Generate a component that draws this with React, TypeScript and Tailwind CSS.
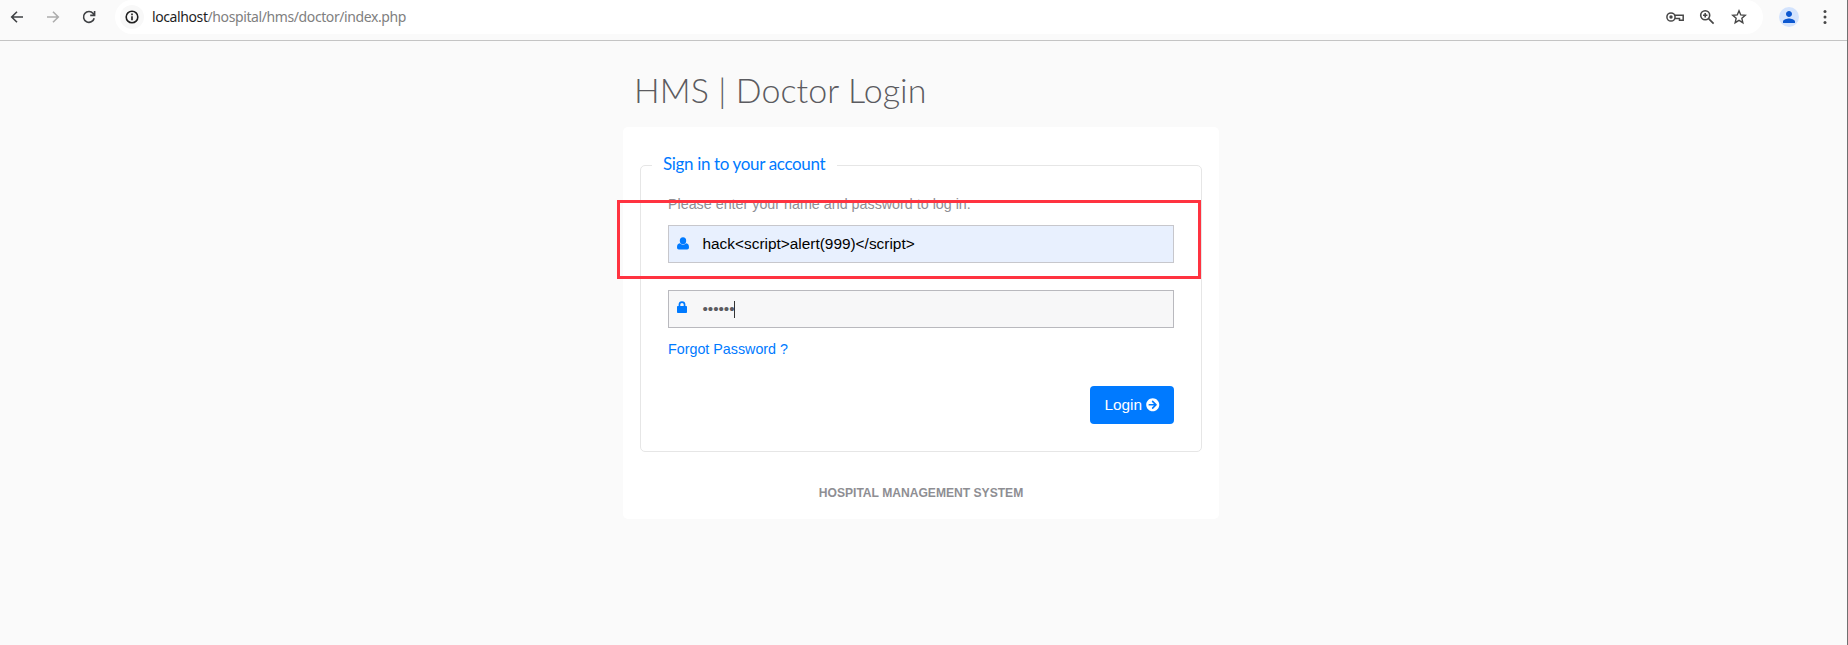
import React from "react";
import { MdPerson } from "react-icons/md";
import { FaArrowCircleRight } from "react-icons/fa";

type IconProps = { className?: string };

function Stroke({ className = "", children }: IconProps & { children: React.ReactNode }) {
  return (
    <svg viewBox="0 0 16 16" fill="none" stroke="currentColor" strokeWidth="1.6" className={`size-4 shrink-0 ${className}`}>
      {children}
    </svg>
  );
}

function Toolbar() {
  return (
    <header className="flex h-[41px] shrink-0 items-start border-b border-[#c4c4c4] bg-[#fafafa]">
      <nav className="flex h-[34px] w-[115px] shrink-0 items-center pl-[9px] text-[#3f4144]">
        <Stroke><path d="M14 8H3M8 2.7 2.7 8 8 13.3" /></Stroke>
        <Stroke className="ml-5 text-[#adadad]"><path d="M2 8h11M8 2.7 13.3 8 8 13.3" /></Stroke>
        <Stroke className="ml-5"><path d="M13.2 9.2A5.4 5.4 0 1 1 12.2 4.6L13.4 6M13.6 2v4.4H9.2" /></Stroke>
      </nav>
      <div className="flex h-[34px] w-[1648px] shrink-0 items-center rounded-r-[17px] rounded-l-[17px] bg-white">
        <span className="ml-[5px] flex size-6 items-center justify-center rounded-full bg-[#f8f8f8] text-[#1f1f1f]">
          <Stroke><circle cx="8" cy="8" r="5.8" /><path d="M8 7.2v4M8 4.6v1.6" /></Stroke>
        </span>
        <span className="ml-2 font-['Noto_Sans'] text-[14px] leading-[20px] tracking-[-0.4px] whitespace-pre text-[#808080]">
          <span className="text-[#1f1f1f]">localhost</span>/hospital/hms/doctor/index.php
        </span>
        <span className="ml-auto flex items-center pr-4 text-[#474747]">
          <svg viewBox="0 0 18 12" fill="none" stroke="currentColor" strokeWidth="1.5" className="-mr-px h-3 w-[18px]">
            <circle cx="5" cy="6" r="4.1" />
            <circle cx="5" cy="6" r="1.7" fill="currentColor" stroke="none" />
            <path d="M8.8 4.3h8.4v5h-3.7V7.6H8.8" />
          </svg>
          <Stroke className="ml-4"><circle cx="6.2" cy="6.2" r="4.5" /><path d="m9.6 9.6 5 5M6.2 4v4.4M4 6.2h4.4" /></Stroke>
          <Stroke className="ml-4">
            <path strokeWidth="1.4" d="m8 1.8 1.75 4.15 4.5.4-3.4 2.95 1 4.4L8 11.4l-3.85 2.3 1-4.4-3.4-2.95 4.5-.4Z" />
          </Stroke>
        </span>
      </div>
      <div className="flex h-[34px] items-center pl-4 text-[#474747]">
        <span className="flex size-5 items-center justify-center rounded-full bg-[#d3e3fd]">
          <MdPerson className="size-[18px] text-[#0b57d0]" />
        </span>
        <svg viewBox="0 0 16 16" fill="currentColor" className="ml-[18px] size-4">
          <circle cx="8" cy="2.5" r="1.5" /><circle cx="8" cy="8" r="1.5" /><circle cx="8" cy="13.5" r="1.5" />
        </svg>
      </div>
    </header>
  );
}

function UserIcon() {
  return (
    <svg viewBox="0 0 12 13" fill="currentColor" className="mb-[2px] h-[13px] w-3">
      <ellipse cx="6" cy="3.7" rx="3.2" ry="3.5" />
      <path d="M2.8 6.2C.8 6.5 0 8 0 10.3c0 1.6.8 2.2 1.8 2.2h8.4c1 0 1.8-.6 1.8-2.2 0-2.3-.8-3.8-2.8-4.1a4.2 4.2 0 0 1-6.4 0Z" />
    </svg>
  );
}

function LockIcon() {
  return (
    <svg viewBox="0 0 10 12" fill="currentColor" className="h-3 w-[10px]">
      <path d="M1.6 5V3.6a3.4 3.4 0 0 1 6.8 0V5h.8c.5 0 .8.3.8.8v5.4c0 .5-.3.8-.8.8H.8c-.5 0-.8-.3-.8-.8V5.8C0 5.3.3 5 .8 5Zm1.7 0h3.4V3.6a1.7 1.7 0 0 0-3.4 0Z" />
    </svg>
  );
}

export default function App() {
  return (
    <div className="relative flex h-[645px] w-[1848px] flex-col overflow-hidden bg-[#fafafa] font-['Liberation_Sans',sans-serif]">
      <Toolbar />
      <main className="ml-[623px] w-[596px]">
        <h1 className="mt-[24px] ml-[11px] h-[62px] font-[Lato] text-[34px] leading-[50px] font-light tracking-[0.08px] whitespace-nowrap text-[#5b5b60]">
          HMS | Doctor Login
        </h1>
        <section className="flex h-[392px] flex-col rounded-[5px] bg-white px-[17px] pt-[38px]">
          <form className="relative flex h-[287px] flex-col rounded-[5px] border border-[#e6e6e6] px-[27px]" onSubmit={(e) => e.preventDefault()}>
            <h2 className="absolute -top-[15px] left-[11px] h-[26px] w-[185px] bg-white pl-[11px] font-[Lato] text-[17px] leading-[25px] tracking-[-0.35px] whitespace-nowrap text-[#007aff]">
              Sign in to your account
            </h2>
            <p className="mt-[28px] h-[31px] text-[14.3px] leading-5 text-[#8e8e93]">
              Please enter your name and password to log in.
            </p>
            <div className="flex h-[38px] shrink-0 items-center border border-[#c7c7cc] bg-[#e8f0fe] pl-2 text-[#007aff]">
              <UserIcon />
              <span className="ml-[13.5px] text-[15.4px] text-black">hack&lt;script&gt;alert(999)&lt;/script&gt;</span>
            </div>
            <div className="mt-[27px] flex h-[38px] shrink-0 items-center border border-[#b9b9be] bg-[#f7f7f8] pl-2 text-[#007aff]">
              <span className="mb-[4px]"><LockIcon /></span>
              <span className="ml-[15.5px] text-[15.4px] tracking-[-0.05px] text-[#5b5b60]">••••••</span>
              <i className="-ml-px h-[17px] w-px bg-[#333]" />
            </div>
            <a className="mt-[11px] text-[14.3px] leading-5 text-[#007aff]" href="#forgot">Forgot Password ?</a>
            <button className="mt-[27px] flex h-[38px] w-[84px] items-center justify-center gap-1 self-end rounded-[4px] bg-[#007aff] text-[15.4px] text-white">
              Login <FaArrowCircleRight className="size-[13.5px]" />
            </button>
          </form>
          <p className="mt-[31px] text-center text-[12.1px] leading-5 font-bold text-[#8e8e93]">HOSPITAL MANAGEMENT SYSTEM</p>
        </section>
      </main>
      <div className="absolute top-[200px] left-[617px] h-[79px] w-[584px] border-3 border-[#ff3340]" />
      <div className="absolute top-0 right-0 h-full w-px bg-[#707070]" />
    </div>
  );
}
